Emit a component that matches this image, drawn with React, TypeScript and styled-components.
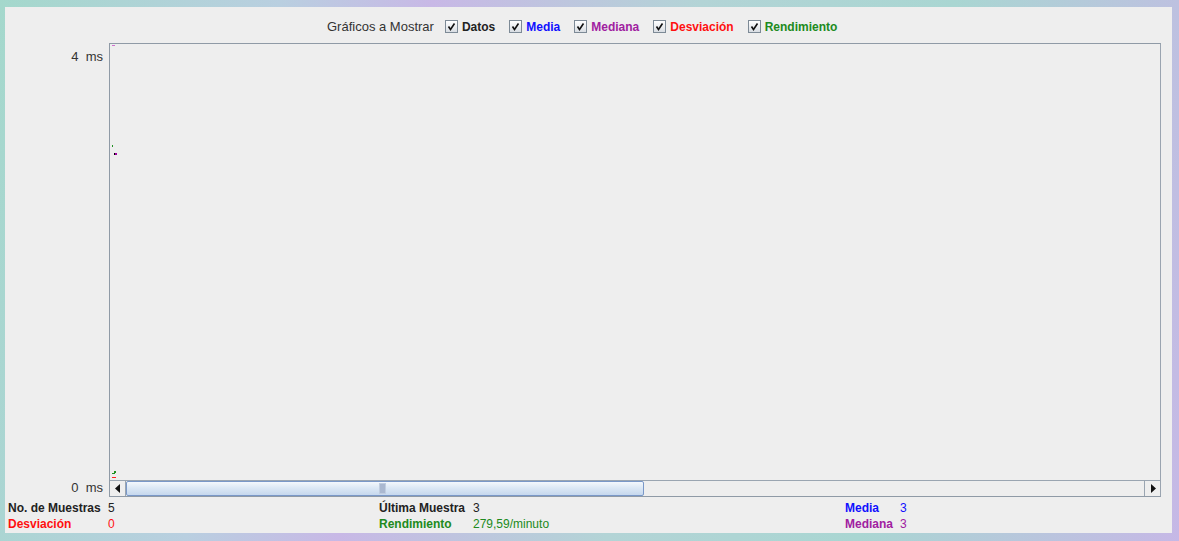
import styled, { createGlobalStyle } from "styled-components";

const GlobalStyle = createGlobalStyle`
  html, body {
    margin: 0;
    padding: 0;
  }
  body {
    width: 1179px;
    height: 541px;
    overflow: hidden;
    background: linear-gradient(100deg, #a4d8cc 0%, #b9cfe0 22%, #c8b8e6 34%, #b3d4d6 55%, #a9d6d2 75%, #c6b8e6 100%);
    font-family: "Liberation Sans", Arial, sans-serif;
  }
`;

const Screen = styled.div`
  padding: 7px 0 0 5px;
`;

const Panel = styled.div`
  width: 1167px;
  height: 526px;
  background: #eeeeee;
  display: flex;
  flex-direction: column;
  box-sizing: border-box;
  font-size: 12px;
  color: #333333;
`;

const Header = styled.div`
  height: 36px;
  flex-shrink: 0;
  display: flex;
  align-items: center;
  padding: 3px 0 0 322px;
  box-sizing: border-box;
  gap: 14px;
`;

const HeaderTitle = styled.span`
  color: #333333;
  font-size: 13px;
  margin-right: -3px;
`;

const Toggle = styled.label`
  display: flex;
  align-items: center;
  gap: 4px;
  font-weight: bold;
  color: ${(p) => p.color};
`;

const Box = styled.span`
  width: 11px;
  height: 11px;
  border: 1px solid #7d8a96;
  background: linear-gradient(#ffffff, #d8dde3);
  display: flex;
  align-items: center;
  justify-content: center;
`;

const ChartRow = styled.div`
  display: flex;
  height: 454px;
  flex-shrink: 0;
`;

const Axis = styled.div`
  width: 104px;
  box-sizing: border-box;
  padding: 6px 6px 2px 0;
  display: flex;
  flex-direction: column;
  justify-content: space-between;
  align-items: flex-end;
  white-space: pre;
  font-size: 13px;
`;

const ChartBox = styled.div`
  width: 1052px;
  border: 1px solid #8f9aa6;
  border-right-color: #9aa4b0;
  box-sizing: border-box;
  display: flex;
  flex-direction: column;
`;

const Plot = styled.div`
  flex: 1;
  position: relative;
`;

const Mark = styled.span<{ $x: number; $y: number; $w: number; $h: number; $c: string }>`
  position: absolute;
  left: ${(p) => p.$x}px;
  top: ${(p) => p.$y}px;
  width: ${(p) => p.$w}px;
  height: ${(p) => p.$h}px;
  background: ${(p) => p.$c};
`;

const ScrollBar = styled.div`
  height: 15px;
  display: flex;
  border-top: 1px solid #9aa5b1;
  background: #eeeeee;
`;

const ArrowBtn = styled.div<{ $side: "left" | "right" }>`
  width: 15px;
  display: flex;
  align-items: center;
  justify-content: center;
  border-${(p) => (p.$side === "left" ? "right" : "left")}: 1px solid #9aa5b1;
  background: #eeeeee;
`;

const Track = styled.div`
  flex: 1;
  display: flex;
`;

const Thumb = styled.div`
  width: 518px;
  box-sizing: border-box;
  border: 1px solid #7a98c8;
  border-radius: 2px;
  background: linear-gradient(#f4f8fd 0%, #dce8f5 45%, #c6d8ee 100%);
  display: flex;
  align-items: center;
  justify-content: center;
`;

const Grip = styled.span`
  width: 5px;
  height: 9px;
  background: #aab8d0;
  border: 1px solid #c0cde0;
  margin-left: -6px;
`;

const Stats = styled.div`
  display: grid;
  grid-template-columns: 371px 466px 1fr;
  grid-auto-rows: 16px;
  padding: 3px 0 0 3px;
  align-items: center;
`;

const Stat = styled.div`
  display: flex;
  color: ${(p) => p.color};
`;

const StatLabel = styled.span<{ $w: number }>`
  width: ${(p) => p.$w}px;
  font-weight: bold;
`;

const Check = () => (
  <svg width="9" height="9" viewBox="0 0 9 9">
    <path d="M1.5 4.5 L3.5 7.5 L7.5 1.5" stroke="#111" strokeWidth="1.6" fill="none" />
  </svg>
);

const toggles = [
  { label: "Datos", color: "#222222" },
  { label: "Media", color: "#1010ff" },
  { label: "Mediana", color: "#a020a0" },
  { label: "Desviación", color: "#ff1010" },
  { label: "Rendimiento", color: "#208a20" },
];

export default function App() {
  return (
    <>
      <GlobalStyle />
      <Screen>
        <Panel>
          <Header>
            <HeaderTitle>Gráficos a Mostrar</HeaderTitle>
            {toggles.map((t) => (
              <Toggle key={t.label} color={t.color}>
                <Box>
                  <Check />
                </Box>
                {t.label}
              </Toggle>
            ))}
          </Header>
          <ChartRow>
            <Axis>
              <span>4  ms</span>
              <span>0  ms</span>
            </Axis>
            <ChartBox>
              <Plot>
                <Mark $x={2} $y={1} $w={3} $h={1} $c="#d070d0" />
                <Mark $x={2} $y={101} $w={1} $h={2} $c="#209020" />
                <Mark $x={4} $y={109} $w={1} $h={2} $c="#000000" />
                <Mark $x={5} $y={109} $w={2} $h={2} $c="#a000a0" />
                <Mark $x={4} $y={427} $w={2} $h={2} $c="#209020" />
                <Mark $x={2} $y={429} $w={3} $h={1} $c="#209020" />
                <Mark $x={2} $y={433} $w={4} $h={1} $c="#ff2020" />
              </Plot>
              <ScrollBar>
                <ArrowBtn $side="left">
                  <svg width="6" height="9" viewBox="0 0 6 9">
                    <path d="M5 0 L0 4.5 L5 9 Z" fill="#111" />
                  </svg>
                </ArrowBtn>
                <Track>
                  <Thumb>
                    <Grip />
                  </Thumb>
                </Track>
                <ArrowBtn $side="right">
                  <svg width="6" height="9" viewBox="0 0 6 9">
                    <path d="M1 0 L6 4.5 L1 9 Z" fill="#111" />
                  </svg>
                </ArrowBtn>
              </ScrollBar>
            </ChartBox>
          </ChartRow>
          <Stats>
            <Stat color="#222222">
              <StatLabel $w={100}>No. de Muestras</StatLabel>5
            </Stat>
            <Stat color="#222222">
              <StatLabel $w={94}>Última Muestra</StatLabel>3
            </Stat>
            <Stat color="#1010ff">
              <StatLabel $w={55}>Media</StatLabel>3
            </Stat>
            <Stat color="#ff1010">
              <StatLabel $w={100}>Desviación</StatLabel>0
            </Stat>
            <Stat color="#208a20">
              <StatLabel $w={94}>Rendimiento</StatLabel>279,59/minuto
            </Stat>
            <Stat color="#a020a0">
              <StatLabel $w={55}>Mediana</StatLabel>3
            </Stat>
          </Stats>
        </Panel>
      </Screen>
    </>
  );
}
